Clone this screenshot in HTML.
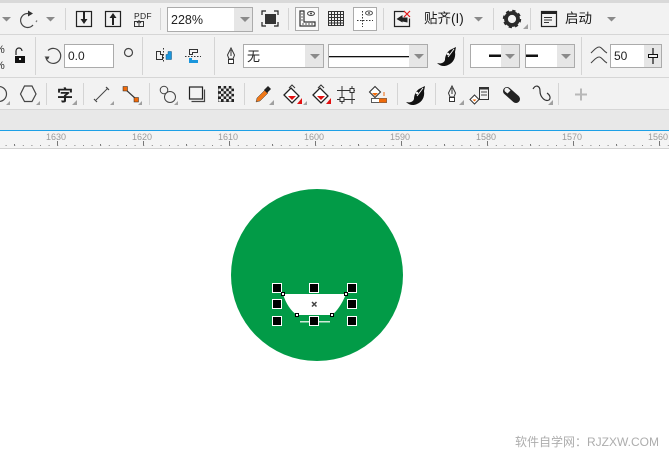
<!DOCTYPE html>
<html><head><meta charset="utf-8"><style>
html,body{margin:0;padding:0;background:#fff}
body{width:669px;height:458px;overflow:hidden;position:relative}
svg{position:absolute;left:0;top:0}
text{font-family:"Liberation Sans","Noto Sans CJK SC",sans-serif}
</style></head><body>
<svg width="669" height="458" viewBox="0 0 669 458" xmlns="http://www.w3.org/2000/svg">
<defs>
<g id="cal">
<path d="M-10 7C-6 8-3 7-2 4-2 0 0-4 3-6 5-7 7-8 9-9L8-4C9 2 6 7 1 9-3 11-7 10-10 7Z" fill="#111"/>
<path d="M7-7L1 1" stroke="#f2f2f2" stroke-width="1"/>
<circle cx="1" cy="-2" r="1.300" fill="#f2f2f2"/>
</g>
</defs>
<rect width="669" height="458" fill="#fff"/>
<rect width="669" height="149" fill="#f2f2f2"/>
<rect width="669" height="3" fill="#d9d9d9"/>
<rect y="34" width="669" height="1" fill="#d6d6d6"/>
<rect y="77" width="669" height="1" fill="#d6d6d6"/>
<rect y="109" width="669" height="1" fill="#d6d6d6"/>
<rect y="110" width="669" height="20" fill="#e8e8e8"/>
<rect y="130" width="669" height="1" fill="#1ea0e6"/>
<rect y="131" width="669" height="17" fill="#f4f4f4"/>
<rect y="148" width="669" height="1" fill="#d2d2d2"/>

<!-- separators -->
<g fill="#d4d4d4">
<rect x="65" y="8" width="1" height="22"/><rect x="160" y="8" width="1" height="22"/><rect x="288" y="8" width="1" height="22"/><rect x="383" y="8" width="1" height="22"/><rect x="493" y="8" width="1" height="22"/><rect x="530" y="8" width="1" height="22"/>
<rect x="35" y="37" width="1" height="38"/><rect x="142" y="37" width="1" height="38"/><rect x="214" y="37" width="1" height="38"/><rect x="463" y="37" width="1" height="38"/><rect x="581" y="37" width="1" height="38"/>
<rect x="46" y="83" width="1" height="22"/><rect x="83" y="83" width="1" height="22"/><rect x="149" y="83" width="1" height="22"/><rect x="244" y="83" width="1" height="22"/><rect x="397" y="83" width="1" height="22"/><rect x="435" y="83" width="1" height="22"/><rect x="558" y="83" width="1" height="22"/>
</g>

<!-- row 1 -->
<g fill="#8a8a8a">
<path d="M2 17h9l-4.500 4.500z"/><path d="M46 17h9l-4.500 4.500z"/><path d="M474 17h9l-4.500 4.500z"/><path d="M607 17h9l-4.500 4.500z"/>
</g>
<g fill="none" stroke="#444" stroke-width="1.200">
<path d="M28 13.500A7 7 0 1 0 33 25"/><path d="M36 22l1-1.500" stroke="#777"/>
</g>
<path d="M28 10.500l5 3-5 3z" fill="#333"/>
<g fill="none" stroke="#222" stroke-width="1.200">
<rect x="76.500" y="11.500" width="15" height="15"/><rect x="105.500" y="11.500" width="15" height="15"/>
</g>
<path d="M83 12h2v7h2.500l-3.500 5-3.500-5H83z" fill="#222"/>
<path d="M112 25v-7h-2.500l3.500-5 3.500 5H114v7z" fill="#222"/>
<text x="134" y="19" font-size="8.500" fill="#222" letter-spacing=".3">PDF</text>
<rect x="134.500" y="21.500" width="9" height="5" fill="none" stroke="#333"/><path d="M139 20v6M137 23l2-2 2 2" stroke="#333" fill="none"/>

<rect x="167.500" y="7.500" width="85" height="24" fill="#e6e6e6" stroke="#ababab"/>
<rect x="168" y="8" width="66" height="23" fill="#fff"/>
<path d="M240 17h10l-5 5z" fill="#8a8a8a"/>
<text x="171" y="24" font-size="12.500" fill="#222">228%</text>

<path d="M262 15v-4h4M274 11h4v4M278 22v4h-4M266 26h-4v-4" fill="none" stroke="#222" stroke-width="1.200"/>
<rect x="265" y="14" width="11" height="10" fill="#333"/>

<rect x="295.500" y="7.500" width="23" height="23" fill="#fafafa" stroke="#ababab"/>
<path d="M300 11v15h15v-4h-11v-11z" fill="none" stroke="#333" stroke-width="1.200"/>
<path d="M303 23v2M306 23v2M309 23v2M312 23v2M301 14h2M301 17h2M301 20h2" stroke="#333" stroke-width=".8"/>
<ellipse cx="311" cy="13.500" rx="3.500" ry="2" fill="none" stroke="#444"/><circle cx="311" cy="13.500" r="1" fill="#444"/>

<g fill="none" stroke="#333">
<path d="M328.500 11.500h15v14h-15zM331.500 11.500v14M334.500 11.500v14M337.500 11.500v14M340.500 11.500v14M328.500 14.500h15M328.500 17.500h15M328.500 20.500h15M328.500 23h15"/>
</g>

<rect x="353.500" y="7.500" width="23" height="23" fill="#fff" stroke="#ababab"/>
<path d="M362.500 11v16M357 20.500h16" stroke="#333" stroke-dasharray="1.500 1.500" fill="none"/>
<ellipse cx="369" cy="13" rx="3.500" ry="2" fill="none" stroke="#555"/><circle cx="369" cy="13" r="1" fill="#555"/>

<path d="M405 11.500h-10.500v15h15v-8" fill="none" stroke="#222" stroke-width="1.200"/>
<path d="M396.500 19l6-4v2.500h5v5l-5-1v1z" fill="#222"/>
<path d="M404 11l6 6M410 11l-6 6" stroke="#e01818" stroke-width="1.200"/>
<text x="424" y="23" font-size="13.500" fill="#1b1b1b">贴齐(I)</text>

<g transform="translate(512 19)">
<circle r="6" fill="none" stroke="#2a2a2a" stroke-width="3.800"/>
<circle r="8" fill="none" stroke="#2a2a2a" stroke-width="2.400" stroke-dasharray="3.200 3.080"/>
</g>
<path d="M523 29h5v-5z" fill="#a0a0a0"/>

<rect x="541.500" y="11.500" width="15" height="15" fill="none" stroke="#222" stroke-width="1.200"/>
<rect x="541" y="11" width="16" height="3" fill="#222"/>
<path d="M544 17.500h8M544 20h8M544 22.500h5" stroke="#333"/>
<text x="565" y="23" font-size="13.500" fill="#1b1b1b">启动</text>

<!-- row 2 -->
<text x="-5" y="53" font-size="11" fill="#333">%</text><text x="-5" y="69" font-size="11" fill="#333">%</text>
<path d="M16 55v-4a3 3 0 0 1 6 0" fill="none" stroke="#222" stroke-width="1.200"/>
<rect x="15" y="56" width="10" height="7" fill="#111"/><rect x="19" y="58" width="2" height="2" fill="#eee"/>
<path d="M48 50.500A7.500 7.500 0 1 1 46 58" fill="none" stroke="#444" stroke-width="1.200"/>
<path d="M46 58.500l-1.500-2h5l-1.500 3zM46 56h5" fill="#444"/>
<rect x="64.500" y="44.500" width="49" height="23" fill="#fff" stroke="#ababab"/>
<text x="68" y="60" font-size="12" fill="#222">0.0</text>
<circle cx="128.500" cy="52.500" r="4" fill="none" stroke="#444" stroke-width="1.200"/>

<path d="M156.500 51.500h4v3h2v5h-6z" fill="none" stroke="#333"/>
<path d="M166 54.500h2v-3h3.500v8H166z" fill="#1a96dc" stroke="#14507a" stroke-width=".5"/>
<path d="M163.500 48v14" stroke="#333" stroke-dasharray="1.500 1.500"/>
<path d="M189.500 49.500h8v3h-5v2h-3z" fill="none" stroke="#333"/>
<path d="M185 56.500h16" stroke="#333" stroke-dasharray="1.500 1.500"/>
<path d="M189 58h3v2h6v3h-9z" fill="#1a96dc"/>

<path d="M231 48l3.500 7-1.500 4h-4l-1.500-4z" fill="none" stroke="#333"/><path d="M231 50v6" stroke="#333"/>
<rect x="228.500" y="59.500" width="5" height="4" fill="#fff" stroke="#333"/>

<rect x="243.500" y="44.500" width="80" height="23" fill="#e6e6e6" stroke="#ababab"/>
<rect x="244" y="45" width="61" height="22" fill="#fff"/>
<path d="M310 54h10l-5 5z" fill="#8a8a8a"/>
<text x="247" y="61" font-size="13" fill="#222">无</text>

<rect x="328.500" y="44.500" width="99" height="23" fill="#e6e6e6" stroke="#ababab"/>
<rect x="329" y="45" width="80" height="22" fill="#fff"/>
<rect x="329" y="56" width="80" height="1.300" fill="#111"/>
<path d="M414 54h10l-5 5z" fill="#8a8a8a"/>

<use href="#cal" transform="translate(447 56)"/>

<rect x="470.500" y="44.500" width="49" height="23" fill="#e6e6e6" stroke="#ababab"/>
<rect x="471" y="45" width="30" height="22" fill="#fff"/>
<rect x="489" y="54.500" width="12" height="2.500" fill="#111"/>
<path d="M505 54h10l-5 5z" fill="#8a8a8a"/>
<rect x="525.500" y="44.500" width="49" height="23" fill="#e6e6e6" stroke="#ababab"/>
<rect x="526" y="45" width="31" height="22" fill="#fff"/>
<rect x="526" y="54.500" width="12" height="2.500" fill="#111"/>
<path d="M561 54h10l-5 5z" fill="#8a8a8a"/>

<path d="M591 53c4-4 6-6 8-6 3 0 4 4 8 6M591 63c4-4 6-6 8-6 3 0 4 4 8 6" fill="none" stroke="#444" stroke-width="1.100"/>
<rect x="610.500" y="44.500" width="51" height="23" fill="#e6e6e6" stroke="#ababab"/>
<rect x="611" y="45" width="33" height="22" fill="#fff"/>
<text x="614" y="60" font-size="12" fill="#222">50</text>
<path d="M653 48v16" stroke="#111" stroke-width="1.200"/><rect x="648.500" y="54.500" width="9" height="3" fill="#f2f2f2" stroke="#111"/>

<!-- row 3 -->
<circle cx="-1" cy="94" r="7.500" fill="none" stroke="#444" stroke-width="1.200"/>
<path d="M6 105h4v-4zM36 105h4v-4z" fill="#a0a0a0"/>
<path d="M20.500 94l4-8h7.500l4 8-4 7.500h-7.500z" fill="none" stroke="#444" stroke-width="1.200"/>
<text x="57" y="101" font-size="16" font-weight="bold" fill="#222">字</text>
<path d="M72 105h5v-5z" fill="#a0a0a0"/>
<path d="M96 100l12-12" stroke="#444"/><path d="M94 99l3 3M106 87l3 3" stroke="#444" stroke-width="1.200"/>
<path d="M110 105h4v-4z" fill="#a0a0a0"/>
<path d="M125 89l11 10" stroke="#333" stroke-width="1.200"/>
<rect x="123" y="86.500" width="4.500" height="4.500" fill="#f06a0a" stroke="#222" stroke-width=".5"/><rect x="134" y="97.500" width="4.500" height="4.500" fill="#f06a0a" stroke="#222" stroke-width=".5"/>
<path d="M138 105h4v-4z" fill="#a0a0a0"/>
<circle cx="164" cy="90" r="3.800" fill="none" stroke="#444"/><circle cx="170" cy="97" r="5.500" fill="none" stroke="#444"/>
<path d="M174 105h4v-4z" fill="#a0a0a0"/>
<rect x="189.500" y="87" width="13" height="12" fill="none" stroke="#222" stroke-width="1.200"/>
<path d="M204.500 89.500v12h-13" fill="none" stroke="#444" stroke-width="1.200"/>
<rect x="218" y="86" width="16" height="16" fill="#222"/>
<g fill="#eee"><rect x="221" y="86" width="2.600" height="2.600"/><rect x="226.200" y="86" width="2.600" height="2.600"/><rect x="231.400" y="86" width="2.600" height="2.600"/><rect x="218.400" y="88.600" width="2.600" height="2.600"/><rect x="223.600" y="88.600" width="2.600" height="2.600"/><rect x="228.800" y="88.600" width="2.600" height="2.600"/><rect x="221" y="91.200" width="2.600" height="2.600"/><rect x="226.200" y="91.200" width="2.600" height="2.600"/><rect x="231.400" y="91.200" width="2.600" height="2.600"/><rect x="218.400" y="93.800" width="2.600" height="2.600"/><rect x="223.600" y="93.800" width="2.600" height="2.600"/><rect x="228.800" y="93.800" width="2.600" height="2.600"/><rect x="221" y="96.400" width="2.600" height="2.600"/><rect x="226.200" y="96.400" width="2.600" height="2.600"/><rect x="231.400" y="96.400" width="2.600" height="2.600"/><rect x="218.400" y="99" width="2.600" height="2.600"/><rect x="223.600" y="99" width="2.600" height="2.600"/><rect x="228.800" y="99" width="2.600" height="2.600"/></g>

<path d="M256 102l1-4 8-8 3 3-8 8z" fill="#f07818" stroke="#444" stroke-width=".5"/>
<path d="M264 90l4-4 3 3-4 4z" fill="#222"/>
<path d="M269 105h5v-5z" fill="#a0a0a0"/>
<g id="fillA"><path d="M284 95l7-7 8 8-7 7z" fill="#fff" stroke="#222" stroke-width="1.300"/><path d="M288 96h8l-4 4z" fill="#e21010"/><path d="M297 104h5v-6z" fill="#e21010"/><path d="M289 88l3-3 3 3" fill="none" stroke="#333"/></g>
<path d="M303 105h4v-4z" fill="#a0a0a0"/>
<use href="#fillA" transform="translate(29 0)"/>
<path d="M342 86v18M352 86v18M337 90.500h18M337 99.500h18" stroke="#333" fill="none"/>
<rect x="340" y="97.500" width="4" height="4" fill="#f2f2f2" stroke="#333"/><rect x="350" y="88.500" width="4" height="4" fill="#f2f2f2" stroke="#333"/>
<path d="M375 86.500l5.500 5.500-5.500 5.500-5.500-5.500z" fill="#fff" stroke="#333" stroke-width="1.100"/><path d="M372 93h6l-3 3z" fill="#f06a0a"/>
<rect x="371.500" y="98.500" width="15" height="4" fill="#fff" stroke="#333" stroke-width=".8"/><rect x="379" y="98.500" width="7.500" height="4" fill="#f06a0a"/>
<path d="M384 92v4" stroke="#f06a0a"/>
<use href="#cal" transform="translate(416 95)"/>
<path d="M452 86l3.500 7-1.500 4h-4l-1.500-4z" fill="none" stroke="#333"/><path d="M452 88v6" stroke="#333"/>
<rect x="449.500" y="97.500" width="5" height="4" fill="#fff" stroke="#333"/>
<path d="M459 105h5v-5z" fill="#a0a0a0"/>
<rect x="479.500" y="87.500" width="9" height="12" fill="#f2f2f2" stroke="#333"/><rect x="479" y="87" width="10" height="2.500" fill="#333"/>
<path d="M481 92h6M481 95h6" stroke="#444"/>
<path d="M474.500 95l4.500 4.500-4.500 4.500-4.500-4.500z" fill="#fff" stroke="#333"/><path d="M472.500 99.500h4l-2 2z" fill="#f06a0a"/>
<path d="M507 91l9 8" stroke="#222" stroke-width="8" stroke-linecap="round"/>
<path d="M505 88.500a2.500 2.500 0 0 1 3.500 0l2 2-3 3-2.500-2a2.500 2.500 0 0 1 0-3z" fill="#f2f2f2"/>
<path d="M533 89c3-5 7-3 7 2 0 6 5 11 9 9 2-2 1-5-2-7" fill="none" stroke="#333" stroke-width="1.200"/>
<path d="M548 105h5v-5z" fill="#a0a0a0"/>
<path d="M581 88.500v12M575 94.500h12" stroke="#b8b8b8" stroke-width="2"/>

<!-- ruler -->
<g font-size="9" fill="#9a9a9a" text-anchor="middle">
<text x="56" y="140">1630</text><text x="142" y="140">1620</text><text x="228" y="140">1610</text><text x="314" y="140">1600</text><text x="400" y="140">1590</text><text x="486" y="140">1580</text><text x="572" y="140">1570</text><text x="658" y="140">1560</text>
</g>
<g stroke="#777">
<path d="M57.500 141v5M143.500 141v5M229.500 141v5M315.500 141v5M401.500 141v5M487.500 141v5M573.500 141v5M659.500 141v5"/>
<path d="M14.500 144v2M100.500 144v2M186.500 144v2M272.500 144v2M358.500 144v2M444.500 144v2M530.500 144v2M616.500 144v2"/>
</g>
<path d="M0 145.500H669" stroke="#888" stroke-dasharray="1 7.600" stroke-dashoffset="3"/>

<!-- canvas -->
<circle cx="317" cy="275" r="86" fill="#029b47"/>
<path d="M283 294H346C342 304 337 311 332 315H297C291 311 286 304 283 294Z" fill="#fff"/>
<rect x="300" y="321" width="30" height="1.500" fill="#cfe9d8"/>
<g fill="#000" stroke="#fff" stroke-width="1">
<rect x="272.500" y="283.500" width="9" height="9"/><rect x="309.500" y="283.500" width="9" height="9"/><rect x="347.500" y="283.500" width="9" height="9"/>
<rect x="272.500" y="299.500" width="9" height="9"/><rect x="347.500" y="299.500" width="9" height="9"/>
<rect x="272.500" y="316.500" width="9" height="9"/><rect x="309.500" y="316.500" width="9" height="9"/><rect x="347.500" y="316.500" width="9" height="9"/>
</g>
<g fill="#fff" stroke="#000" stroke-width="1">
<rect x="281.500" y="292.500" width="3" height="3"/><rect x="344.500" y="292.500" width="3" height="3"/><rect x="295.500" y="313.500" width="3" height="3"/><rect x="330.500" y="313.500" width="3" height="3"/>
</g>
<path d="M312 302l4.500 4.500M316.500 302l-4.500 4.500" stroke="#444" stroke-width="1.500"/>

<text x="515" y="446" font-size="12" fill="#adadad">软件自学网：RJZXW.COM</text>
</svg>
</body></html>
